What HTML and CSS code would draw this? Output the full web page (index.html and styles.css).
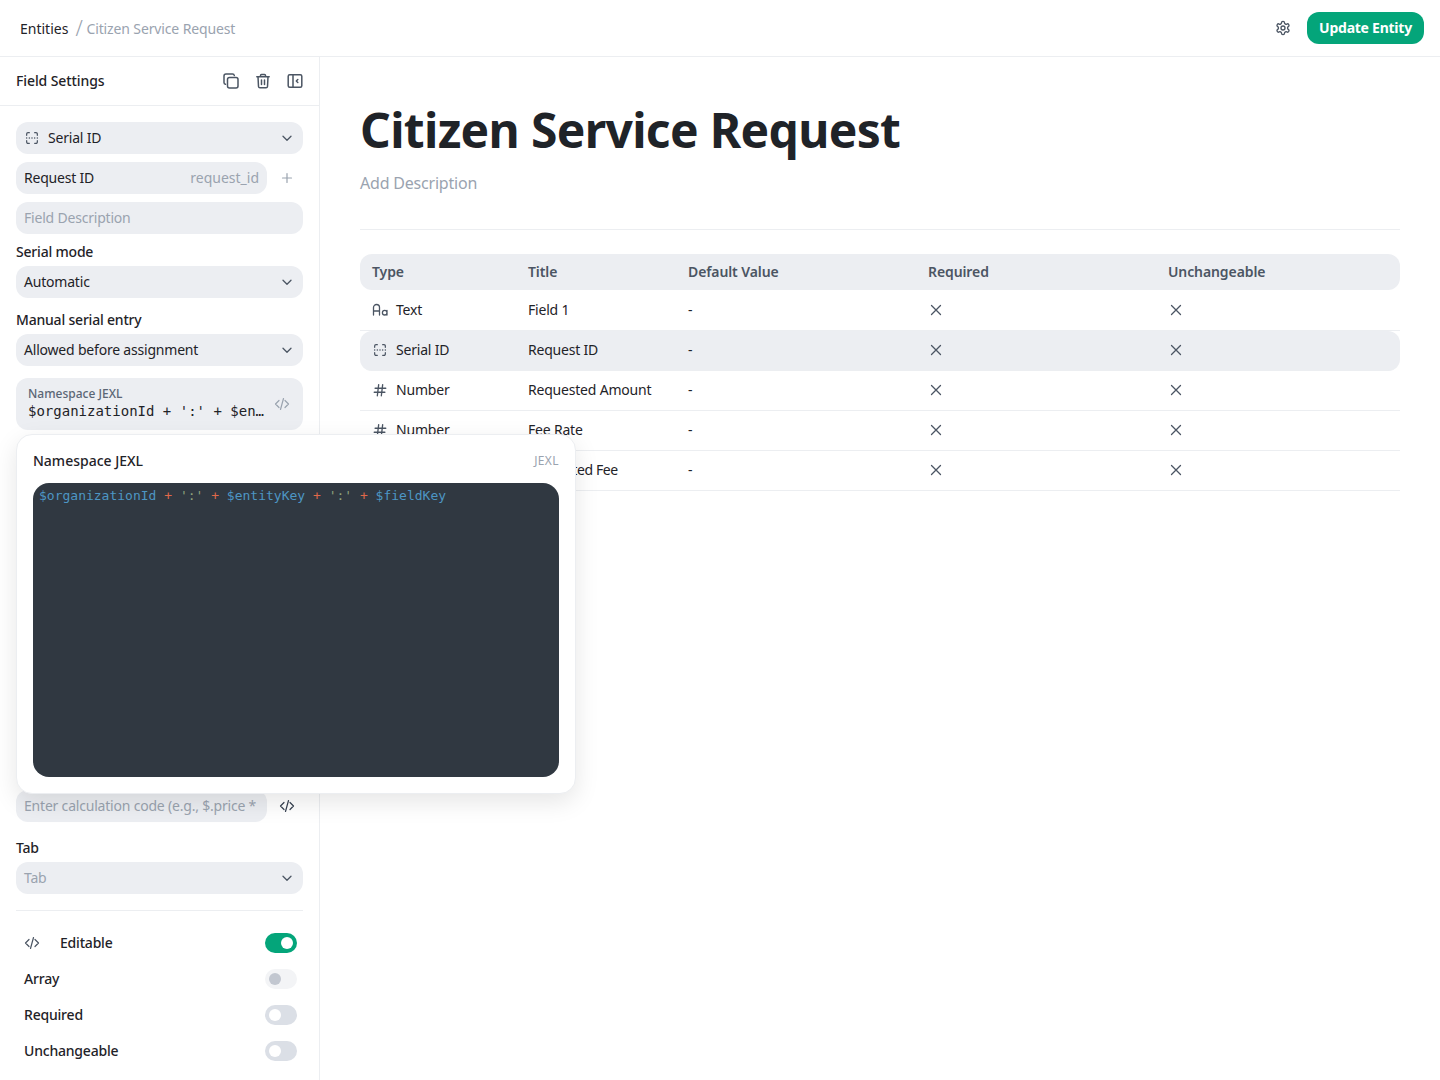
FILE: index.html
```html
<!DOCTYPE html>
<html lang="en">
<head>
  <meta charset="UTF-8" />
  <meta name="viewport" content="width=device-width, initial-scale=1.0"/>
  <title>Citizen Service Request</title>
  <link rel="stylesheet" href="styles.css">
</head>
<body>

  <svg width="0" height="0" class="defs">
    <defs>
      <symbol id="chev" viewBox="0 0 16 16"><path d="M4 6.200l4 4 4-4" fill="none" stroke="currentColor" stroke-width="1.300" stroke-linecap="round" stroke-linejoin="round"/></symbol>
      <symbol id="code" viewBox="0 0 16 16"><path d="M5 4.500L1.500 8 5 11.500M11 4.500L14.500 8 11 11.500M9.500 2.500L6.500 13.500" fill="none" stroke="currentColor" stroke-width="1.200" stroke-linecap="round" stroke-linejoin="round"/></symbol>
      <symbol id="serial" viewBox="-1 -1 18 18"><path d="M2 5V3.500A1.500 1.500 0 0 1 3.500 2H5M11 2h1.500A1.500 1.500 0 0 1 14 3.500V5M14 11v1.500A1.500 1.500 0 0 1 12.500 14H11M5 14H3.500A1.500 1.500 0 0 1 2 12.500V11" fill="none" stroke="currentColor" stroke-width="1.400" stroke-linecap="round"/><path d="M2 8h.01M5 8h.01M8 8h.01M11 8h.01M14 8h.01" stroke="currentColor" stroke-width="1.700" stroke-linecap="round"/></symbol>
      <symbol id="aa" viewBox="0 0 16 16"><path d="M1.500 13V5.500a3 3 0 0 1 6 0V13M1.500 9h6M15 8.500V13M15 10.700a2.300 2.300 0 1 1-4.600 0 2.300 2.300 0 0 1 4.600 0z" fill="none" stroke="currentColor" stroke-width="1.300" stroke-linecap="round"/></symbol>
      <symbol id="hash" viewBox="-1 -1 18 18"><path d="M2.500 6h12M1.500 10.500h12M6.500 2L5 14.500M11 2L9.500 14.500" fill="none" stroke="currentColor" stroke-width="1.500" stroke-linecap="round"/></symbol>
      <symbol id="cross" viewBox="0 0 16 16"><path d="M3.500 3.500l9 9M12.500 3.500l-9 9" fill="none" stroke="currentColor" stroke-width="1.300" stroke-linecap="round"/></symbol>
    </defs>
  </svg>

  <header class="topbar">
    <div class="crumbs">
      <span class="crumb-root">Entities</span>
      <span class="crumb-sep">/</span>
      <span class="crumb-current">Citizen Service Request</span>
    </div>
    <div class="top-actions">
      <svg class="gear" width="16" height="16" viewBox="0 0 24 24" fill="none" stroke="currentColor" stroke-width="2" stroke-linecap="round" stroke-linejoin="round"><path d="M12.220 2h-.44a2 2 0 0 0-2 2v.18a2 2 0 0 1-1 1.730l-.43.250a2 2 0 0 1-2 0l-.15-.08a2 2 0 0 0-2.730.73l-.22.380a2 2 0 0 0 .73 2.730l.15.100a2 2 0 0 1 1 1.720v.510a2 2 0 0 1-1 1.740l-.15.090a2 2 0 0 0-.73 2.730l.22.380a2 2 0 0 0 2.730.730l.15-.080a2 2 0 0 1 2 0l.43.250a2 2 0 0 1 1 1.730V20a2 2 0 0 0 2 2h.44a2 2 0 0 0 2-2v-.18a2 2 0 0 1 1-1.730l.43-.250a2 2 0 0 1 2 0l.15.080a2 2 0 0 0 2.730-.730l.22-.390a2 2 0 0 0-.73-2.730l-.15-.080a2 2 0 0 1-1-1.740v-.500a2 2 0 0 1 1-1.740l.15-.090a2 2 0 0 0 .73-2.730l-.22-.380a2 2 0 0 0-2.730-.730l-.15.080a2 2 0 0 1-2 0l-.43-.250a2 2 0 0 1-1-1.730V4a2 2 0 0 0-2-2z"/><circle cx="12" cy="12" r="3"/></svg>
      <button class="btn-update">Update Entity</button>
    </div>
  </header>

  <div class="layout">
    <aside class="sidebar">
      <div class="side-head">
        <span class="side-title">Field Settings</span>
        <div class="side-icons">
          <svg width="16" height="16" viewBox="0 0 16 16" fill="none" stroke="currentColor" stroke-width="1.500" stroke-linecap="round" stroke-linejoin="round"><rect x="4.500" y="4.500" width="10.500" height="10.500" rx="2"/><path d="M2.500 11.300A1.800 1.800 0 0 1 1 9.500V3a2 2 0 0 1 2-2h6.500a1.800 1.800 0 0 1 1.800 1.500"/></svg>
          <svg width="16" height="16" viewBox="0 0 16 16" fill="none" stroke="currentColor" stroke-width="1.500" stroke-linecap="round" stroke-linejoin="round"><path d="M1.800 3.800h12.400M5.500 3.800V2.500a1 1 0 0 1 1-1h3a1 1 0 0 1 1 1v1.300M3 3.800l.5 9.700a1.500 1.500 0 0 0 1.500 1.300h6a1.500 1.500 0 0 0 1.500-1.300l.5-9.700M6.500 7v4.500M9.500 7v4.500"/></svg>
          <svg width="16" height="16" viewBox="0 0 16 16" fill="none" stroke="currentColor" stroke-width="1.500" stroke-linecap="round" stroke-linejoin="round"><rect x="1.200" y="1.700" width="13.600" height="12.600" rx="1.500"/><path d="M6 1.700v12.600M10.800 6.500L9.300 8l1.500 1.500"/></svg>
        </div>
      </div>

      <div class="side-body">
        <div class="field select">
          <svg class="field-icon" width="16" height="16"><use href="#serial"/></svg>
          <span>Serial ID</span>
          <svg class="chev" width="16" height="16"><use href="#chev"/></svg>
        </div>

        <div class="field-row">
          <div class="field grow">
            <span>Request ID</span>
            <span class="muted key">request_id</span>
          </div>
          <span class="row-btn light">
            <svg width="16" height="16" viewBox="0 0 16 16"><path d="M8 3.500v9M3.500 8h9" stroke="currentColor" stroke-width="1.200" stroke-linecap="round"/></svg>
          </span>
        </div>

        <div class="field"><span class="muted">Field Description</span></div>

        <label class="label lab-first">Serial mode</label>
        <div class="field select">
          <span>Automatic</span>
          <svg class="chev" width="16" height="16"><use href="#chev"/></svg>
        </div>

        <label class="label">Manual serial entry</label>
        <div class="field select">
          <span>Allowed before assignment</span>
          <svg class="chev" width="16" height="16"><use href="#chev"/></svg>
        </div>

        <div class="jexl-box">
          <div class="jexl-text">
            <div class="jexl-label">Namespace JEXL</div>
            <div class="jexl-code">$organizationId + ':' + $entityKey + ':' + $fieldKey</div>
          </div>
          <svg class="jexl-icon" width="16" height="16"><use href="#code"/></svg>
        </div>

        <div class="hidden-area"></div>

        <div class="field-row">
          <div class="field grow"><span class="muted">Enter calculation code (e.g., $.price *</span></div>
          <span class="row-btn">
            <svg width="16" height="16"><use href="#code"/></svg>
          </span>
        </div>

        <label class="label lab-tab">Tab</label>
        <div class="field select">
          <span class="muted">Tab</span>
          <svg class="chev" width="16" height="16"><use href="#chev"/></svg>
        </div>

        <hr class="side-rule">

        <div class="toggle-row">
          <svg class="toggle-icon" width="16" height="16"><use href="#code"/></svg>
          <span class="toggle-name">Editable</span>
          <span class="toggle on"></span>
        </div>
        <div class="toggle-row">
          <span class="toggle-name">Array</span>
          <span class="toggle disabled"></span>
        </div>
        <div class="toggle-row">
          <span class="toggle-name">Required</span>
          <span class="toggle"></span>
        </div>
        <div class="toggle-row">
          <span class="toggle-name">Unchangeable</span>
          <span class="toggle"></span>
        </div>
      </div>
    </aside>

    <main class="main">
      <h1>Citizen Service Request</h1>
      <p class="desc">Add Description</p>
      <hr class="main-rule">

      <div class="table">
        <div class="t-row t-head">
          <div>Type</div><div>Title</div><div>Default Value</div><div>Required</div><div>Unchangeable</div>
        </div>
        <div class="t-row">
          <div class="t-type"><svg width="16" height="16"><use href="#aa"/></svg>Text</div><div>Field 1</div><div>-</div>
          <div><svg class="x" width="16" height="16"><use href="#cross"/></svg></div><div><svg class="x" width="16" height="16"><use href="#cross"/></svg></div>
        </div>
        <div class="t-row selected">
          <div class="t-type"><svg width="16" height="16"><use href="#serial"/></svg>Serial ID</div><div>Request ID</div><div>-</div>
          <div><svg class="x" width="16" height="16"><use href="#cross"/></svg></div><div><svg class="x" width="16" height="16"><use href="#cross"/></svg></div>
        </div>
        <div class="t-row">
          <div class="t-type"><svg width="16" height="16"><use href="#hash"/></svg>Number</div><div>Requested Amount</div><div>-</div>
          <div><svg class="x" width="16" height="16"><use href="#cross"/></svg></div><div><svg class="x" width="16" height="16"><use href="#cross"/></svg></div>
        </div>
        <div class="t-row">
          <div class="t-type"><svg width="16" height="16"><use href="#hash"/></svg>Number</div><div>Fee Rate</div><div>-</div>
          <div><svg class="x" width="16" height="16"><use href="#cross"/></svg></div><div><svg class="x" width="16" height="16"><use href="#cross"/></svg></div>
        </div>
        <div class="t-row">
          <div class="t-type"><svg width="16" height="16"><use href="#hash"/></svg>Number</div><div class="t-tight">Calculated Fee</div><div>-</div>
          <div><svg class="x" width="16" height="16"><use href="#cross"/></svg></div><div><svg class="x" width="16" height="16"><use href="#cross"/></svg></div>
        </div>
      </div>
    </main>
  </div>

  <div class="popover">
    <div class="pop-head">
      <span class="pop-title">Namespace JEXL</span>
      <span class="pop-tag">JEXL</span>
    </div>
    <pre class="editor"><span class="c-var">$organizationId</span> <span class="c-op">+</span> <span class="c-str">':'</span> <span class="c-op">+</span> <span class="c-var">$entityKey</span> <span class="c-op">+</span> <span class="c-str">':'</span> <span class="c-op">+</span> <span class="c-var">$fieldKey</span></pre>
  </div>

</body>
</html>
```

FILE: styles.css
```css
* {
  box-sizing: border-box;
}

body {
  margin: 0;
  height: 1080px;
  overflow: hidden;
  background: #fff;
  color: #1f2328;
  font-family: "Noto Sans", sans-serif;
  font-size: 14px;
  line-height: 20px;
  letter-spacing: -0.2px;
}

.defs {
  position: absolute;
}

svg {
  display: block;
  flex: none;
}

/* top bar */
.topbar {
  height: 57px;
  padding: 0 16px 0 20px;
  border-bottom: 1px solid #eceef1;
  display: flex;
  align-items: center;
  justify-content: space-between;
}

.crumbs {
  display: flex;
  align-items: center;
  padding-top: 2px;
}

.crumb-root {
  letter-spacing: 0;
}

.crumb-sep {
  color: #9aa3af;
  font-size: 21px;
  font-weight: 300;
  margin: -3px 4px 0 7px;
}

.crumb-current {
  color: #9aa3af;
  letter-spacing: -0.13px;
}

.top-actions {
  display: flex;
  align-items: center;
  gap: 16px;
}

.gear {
  color: #4b5563;
}

.btn-update {
  width: 117px;
  height: 32px;
  padding: 0 0 2px;
  border: 0;
  border-radius: 12px;
  background: #04a57a;
  color: #fff;
  font: 700 14px "Noto Sans", sans-serif;
  letter-spacing: -0.25px;
}

/* layout */
.layout {
  display: flex;
  height: 1023px;
}

.sidebar {
  width: 320px;
  flex: none;
  border-right: 1px solid #eceef1;
}

.side-head {
  height: 49px;
  padding: 0 16px;
  border-bottom: 1px solid #eceef1;
  display: flex;
  align-items: center;
  justify-content: space-between;
}

.side-title {
  font-weight: 500;
  letter-spacing: -0.1px;
}

.side-icons {
  display: flex;
  gap: 16px;
  color: #4b5563;
}

.side-body {
  padding: 16px 16px 0;
  display: flex;
  flex-direction: column;
}

.field {
  height: 32px;
  margin-bottom: 8px;
  padding: 0 8px;
  border-radius: 12px;
  background: #eceef2;
  display: flex;
  align-items: center;
  justify-content: space-between;
  white-space: nowrap;
}

.field.select {
  justify-content: flex-start;
}

.field.select .chev {
  margin-left: auto;
  color: #4b5563;
}

.field-icon {
  margin-right: 8px;
  color: #4b5563;
}

.muted {
  color: #9aa3af;
}

.key {
  letter-spacing: 0;
}

.field-row {
  display: flex;
  gap: 4px;
}

.grow {
  flex: 1;
  min-width: 0;
}

.row-btn {
  width: 32px;
  height: 32px;
  display: flex;
  align-items: center;
  justify-content: center;
  color: #374151;
}

.row-btn.light {
  color: #9aa3af;
}

.label {
  display: block;
  height: 20px;
  margin-top: 4px;
  margin-bottom: 4px;
  font-weight: 500;
}

.label.lab-first {
  margin-top: 0;
}

.jexl-box {
  height: 52px;
  margin-top: 4px;
  padding: 8px 13px 8px 12px;
  border-radius: 12px;
  background: #eceef2;
  display: flex;
  align-items: center;
  gap: 9px;
}

.jexl-text {
  flex: 1;
  min-width: 0;
}

.jexl-label {
  color: #5b6675;
  font-size: 12px;
  line-height: 14px;
  font-weight: 500;
  letter-spacing: 0;
}

.jexl-code {
  font-family: "DejaVu Sans Mono", monospace;
  font-size: 14px;
  line-height: 20px;
  letter-spacing: 0;
  white-space: nowrap;
  overflow: hidden;
  text-overflow: ellipsis;
}

.jexl-icon {
  color: #9aa3af;
}

/* covered by the popover */
.hidden-area {
  height: 360px;
}

.label.lab-tab {
  margin-top: 8px;
}

.side-rule {
  width: 100%;
  margin: 8px 0 14px;
  border: 0;
  border-top: 1px solid #eceef1;
}

.toggle-row {
  height: 36px;
  padding: 0 6px 0 8px;
  display: flex;
  align-items: center;
  font-weight: 500;
}

.toggle-icon {
  margin-right: 20px;
  color: #4b5563;
}

.toggle {
  position: relative;
  width: 32px;
  height: 20px;
  margin-left: auto;
  border-radius: 10px;
  background: #dbdfe6;
}

.toggle::after {
  content: "";
  position: absolute;
  top: 4px;
  left: 4px;
  width: 12px;
  height: 12px;
  border-radius: 50%;
  background: #fff;
}

.toggle.on {
  background: #04a57a;
}

.toggle.on::after {
  left: 16px;
}

.toggle.disabled {
  background: #f3f4f6;
}

.toggle.disabled::after {
  background: #c2c7d0;
}

/* main content */
.main {
  flex: 1;
  padding: 40px;
}

h1 {
  margin: 0;
  font-size: 48px;
  line-height: 66px;
  font-weight: 700;
  letter-spacing: -0.68px;
}

.desc {
  margin: 8px 0 0;
  color: #9aa3af;
  font-size: 16px;
  line-height: 24px;
}

.main-rule {
  margin: 34px 0 24px;
  border: 0;
  border-top: 1px solid #eceef1;
}

.t-row {
  height: 40px;
  padding-left: 12px;
  padding-bottom: 1px;
  border-bottom: 1px solid #eceef1;
  display: grid;
  grid-template-columns: 156px 160px 240px 240px 1fr;
  align-items: center;
}

.t-head {
  height: 36px;
  margin-bottom: 1px;
  padding-bottom: 0;
  border: 0;
  border-radius: 12px;
  background: #eceef2;
  color: #4b5563;
  font-weight: 600;
  letter-spacing: -0.1px;
}

.t-row.selected {
  border-radius: 12px;
  background: #eceef2;
}

.t-type {
  display: flex;
  align-items: center;
  gap: 8px;
}

.t-type svg {
  color: #4b5563;
}

.t-tight {
  letter-spacing: -0.4px;
}

.x {
  color: #4b5563;
}

/* popover */
.popover {
  position: absolute;
  left: 16px;
  top: 434px;
  width: 560px;
  height: 360px;
  padding: 16px;
  border: 1px solid #eceef1;
  border-radius: 16px;
  background: #fff;
  box-shadow: 0 8px 24px rgba(0, 0, 0, 0.1);
}

.pop-head {
  height: 32px;
  display: flex;
  align-items: flex-start;
  justify-content: space-between;
}

.pop-title {
  font-weight: 500;
  letter-spacing: 0;
}

.pop-tag {
  color: #9aa3af;
  font-size: 12px;
  letter-spacing: 0.4px;
}

.editor {
  height: 294px;
  margin: 0;
  padding: 4px 6px;
  border-radius: 16px;
  background: #303841;
  font-family: "DejaVu Sans Mono", monospace;
  font-size: 13px;
  line-height: 17px;
  letter-spacing: 0;
}

.c-var {
  color: #4d96c4;
}

.c-op {
  color: #e0694a;
}

.c-str {
  color: #8fa37d;
}
```
